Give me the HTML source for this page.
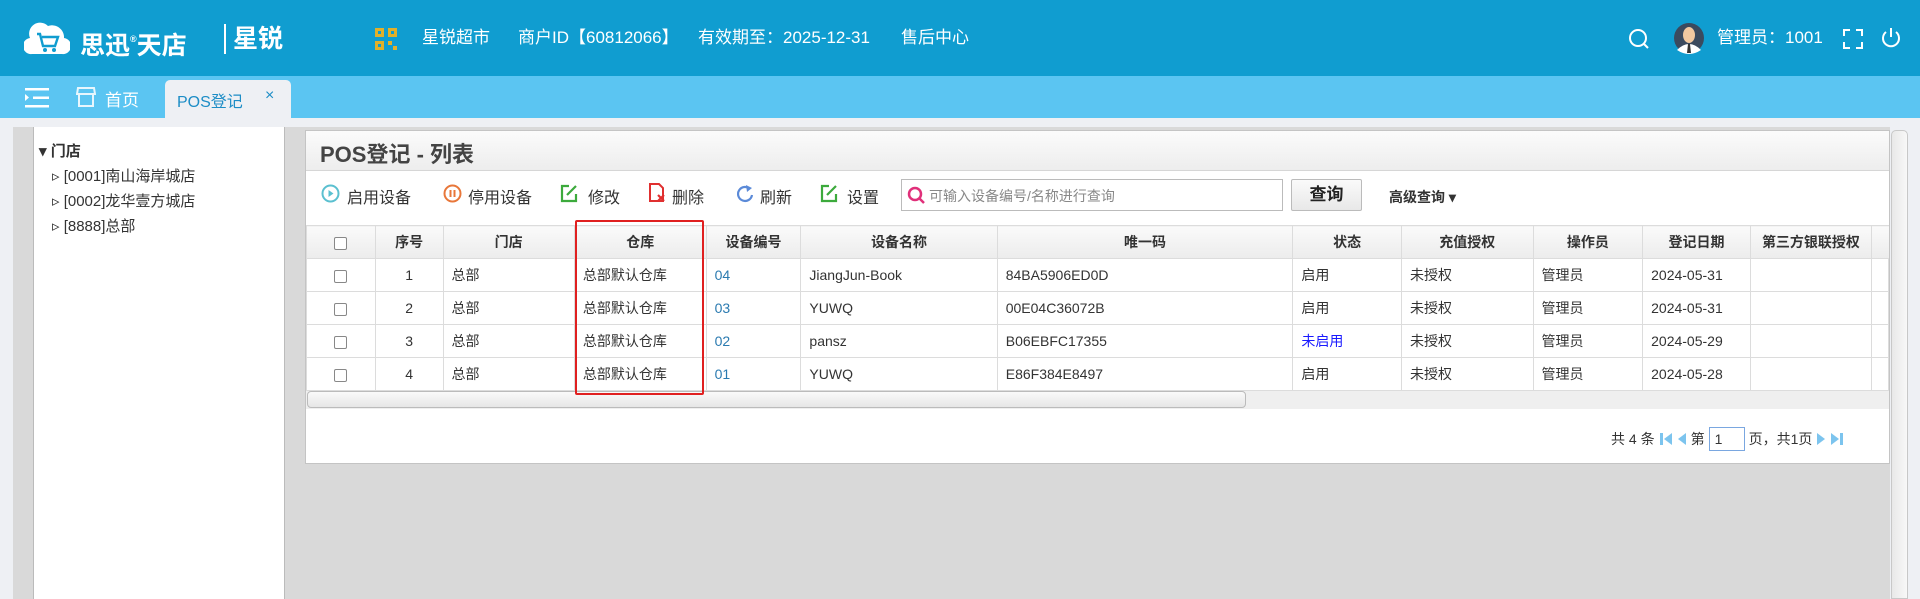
<!DOCTYPE html>
<html><head><meta charset="utf-8"><style>
*{margin:0;padding:0;box-sizing:border-box}
body{width:1920px;height:599px;overflow:hidden;background:#eef0f4;font-family:"Liberation Sans","Noto Sans CJK SC",sans-serif;color:#333;position:relative}
.abs{position:absolute}
.hdr{left:0;top:0;width:1920px;height:76px;background:#109dd0;color:#fff}
.hdr .t{position:absolute;top:27px;font-size:17px;line-height:22px;white-space:nowrap}
.tabs{left:0;top:76px;width:1920px;height:42px;background:#5bc5f2}
.gray{left:13px;top:127px;width:1877px;height:472px;background:#d9d9d9}
.tree{left:33px;top:127px;width:252px;height:472px;background:#fff;border-left:1px solid #bbb;border-right:1px solid #bbb;font-size:15px}
.tree div{position:absolute;white-space:nowrap;color:#333}
.main{left:305px;top:130px;width:1585px;height:334px;background:#fff;border:1px solid #c4c4c4}
.title{position:absolute;left:0;top:0;width:100%;height:40px;background:linear-gradient(#fbfbfb,#ededed);border-bottom:1px solid #d6d6d6;font-size:22px;font-weight:bold;color:#444;padding:6px 0 0 14px}
.tb{position:absolute;top:53px;font-size:16px;white-space:nowrap}
table{position:absolute;left:0;top:94px;border-collapse:collapse;font-size:14px}
td,th{border:1px solid #dcdcdc;height:33px;padding:0 8px;white-space:nowrap;text-align:left;font-weight:normal}
th{height:33px;background:linear-gradient(#fafafa,#ececec);font-weight:bold;text-align:center}
.c{text-align:center}
.cb{display:inline-block;width:13px;height:13px;border:1px solid #888;border-radius:2px;background:#fff;vertical-align:middle}
.lk{color:#2a7ab0}
</style></head><body>
<div class="abs hdr">
 <svg class="abs" style="left:24px;top:20px" width="46" height="36" viewBox="0 0 46 36"><path d="M8 34 A8 8 0 0 1 6 18 A11 11 0 0 1 24 6 A12 12 0 0 1 40 18 A8 8 0 0 1 38 34Z" fill="#fff"/><path d="M13 14h3l3 12h12l3-9H18" stroke="#109dd0" stroke-width="2.4" fill="none"/><circle cx="21" cy="30" r="2" fill="#109dd0"/><circle cx="30" cy="30" r="2" fill="#109dd0"/></svg>
 <div class="t" style="left:80px;top:24px;font-size:25px;line-height:30px;font-weight:bold">思迅<sup style="font-size:9px;vertical-align:12px">®</sup>天店</div>
 <div class="abs" style="left:224px;top:24px;width:2px;height:30px;background:#fff"></div>
 <div class="t" style="left:233px;top:24px;font-size:25px;line-height:30px;font-weight:bold">星锐</div>
 <svg class="abs" style="left:375px;top:28px" width="22" height="22" viewBox="0 0 22 22" fill="#e2b02a"><rect x="0" y="0" width="9" height="9"/><rect x="13" y="0" width="9" height="9"/><rect x="0" y="13" width="9" height="9"/><rect x="13" y="13" width="4" height="4"/><rect x="18" y="18" width="4" height="4"/><rect x="3" y="3" width="3" height="3" fill="#109dd0"/><rect x="16" y="3" width="3" height="3" fill="#109dd0"/><rect x="3" y="16" width="3" height="3" fill="#109dd0"/></svg>
 <div class="t" style="left:422px">星锐超市</div>
 <div class="t" style="left:518px">商户ID【60812066】</div>
 <div class="t" style="left:698px">有效期至：2025-12-31</div>
 <div class="t" style="left:901px">售后中心</div>
 <svg class="abs" style="left:1628px;top:28px" width="22" height="22" viewBox="0 0 22 22"><circle cx="10" cy="10" r="8" stroke="#fff" stroke-width="2" fill="none"/><path d="M16 16l4 4" stroke="#fff" stroke-width="2"/></svg>
 <svg class="abs" style="left:1673px;top:22px" width="32" height="32" viewBox="0 0 32 32"><circle cx="16" cy="16" r="15" fill="#3b4a5e"/><ellipse cx="16" cy="13" rx="6" ry="8" fill="#f2c9a0"/><path d="M4 28 Q16 16 28 28 Q16 36 4 28Z" fill="#fff"/><path d="M15 22h2l1 9h-4z" fill="#333"/></svg>
 <div class="t" style="left:1717px">管理员：1001</div>
 <svg class="abs" style="left:1843px;top:29px" width="20" height="20" viewBox="0 0 20 20" stroke="#fff" stroke-width="2" fill="none"><path d="M1 7V1h6M13 1h6v6M19 13v6h-6M7 19H1v-6"/></svg>
 <svg class="abs" style="left:1880px;top:27px" width="22" height="22" viewBox="0 0 22 22" stroke="#fff" stroke-width="2" fill="none"><path d="M6 5A8 8 0 1 0 16 5"/><path d="M11 1v9"/></svg>
</div>
<div class="abs tabs">
 <svg class="abs" style="left:25px;top:12px" width="24" height="20" viewBox="0 0 24 20" fill="#fff"><rect x="0" y="0" width="24" height="2.5"/><rect x="8" y="8.5" width="16" height="2.5"/><rect x="0" y="17" width="24" height="2.5"/><path d="M0 6l4 3.5-4 3.5z"/></svg>
 <svg class="abs" style="left:76px;top:10px" width="20" height="22" viewBox="0 0 20 22" stroke="#e8f6fd" stroke-width="2" fill="none"><path d="M2 2h16l1 6H1z"/><path d="M3 8v12h14V8"/></svg>
 <div class="abs" style="left:105px;top:10px;color:#fff;font-size:17px">首页</div>
 <div class="abs" style="left:165px;top:4px;width:126px;height:38px;background:#eef0f4;border-radius:5px 5px 0 0;color:#1d8dc6;font-size:16px;padding:8px 0 0 12px">POS登记<span style="position:absolute;left:100px;top:7px;font-size:16px">×</span></div>
</div>
<div class="abs gray"></div>
<div class="abs tree">
 <div style="left:5px;top:13px;font-weight:bold">▾ 门店</div>
 <div style="left:18px;top:38px">▹ [0001]南山海岸城店</div>
 <div style="left:18px;top:63px">▹ [0002]龙华壹方城店</div>
 <div style="left:18px;top:88px">▹ [8888]总部</div>
</div>
<div class="abs" style="left:1891px;top:130px;width:17px;height:469px;background:linear-gradient(90deg,#e8e8e8,#f8f8f8);border:1px solid #c8c8c8;border-radius:5px 5px 0 0"></div>
<div class="abs main">
 <div class="title">POS登记 - 列表</div>
 <svg class="abs" style="left:15px;top:53px" width="19" height="19" viewBox="0 0 19 19"><circle cx="9.5" cy="9.5" r="8" stroke="#5bc0d0" stroke-width="2" fill="none"/><path d="M7.5 6v7l5-3.5z" fill="#5bc0d0"/></svg>
 <div class="tb" style="left:41px">启用设备</div>
 <svg class="abs" style="left:137px;top:53px" width="19" height="19" viewBox="0 0 19 19"><circle cx="9.5" cy="9.5" r="8" stroke="#e8773a" stroke-width="2" fill="none"/><path d="M7.5 6v7M11.5 6v7" stroke="#e8773a" stroke-width="2"/></svg>
 <div class="tb" style="left:162px">停用设备</div>
 <svg class="abs" style="left:254px;top:52px" width="19" height="20" viewBox="0 0 19 20" stroke="#3caa3c" stroke-width="2.2" fill="none"><path d="M9 3H2v15h14v-7"/><path d="M7 12l9-9" /></svg>
 <div class="tb" style="left:282px">修改</div>
 <svg class="abs" style="left:342px;top:52px" width="19" height="20" viewBox="0 0 19 20"><path d="M2 1h9l4 4v13H2z" stroke="#e03030" stroke-width="2" fill="none"/><path d="M10 12l6 6M16 12l-6 6" stroke="#e03030" stroke-width="2.2"/></svg>
 <div class="tb" style="left:366px">删除</div>
 <svg class="abs" style="left:431px;top:53px" width="17" height="19" viewBox="0 0 17 19"><path d="M13 5A7 7 0 1 0 15 11" stroke="#5b8ad8" stroke-width="2.2" fill="none"/><path d="M9 1l6 3-5 4z" fill="#5b8ad8"/></svg>
 <div class="tb" style="left:454px">刷新</div>
 <svg class="abs" style="left:514px;top:52px" width="19" height="20" viewBox="0 0 19 20" stroke="#3caa3c" stroke-width="2.2" fill="none"><path d="M9 3H2v15h14v-7"/><path d="M7 12l9-9"/></svg>
 <div class="tb" style="left:541px">设置</div>
 <div class="abs" style="left:595px;top:48px;width:382px;height:32px;border:1px solid #bbb;background:#fff;font-size:14px;color:#888;padding:6px 0 0 27px">可输入设备编号/名称进行查询
  <svg class="abs" style="left:5px;top:6px" width="19" height="19" viewBox="0 0 19 19"><circle cx="8" cy="8" r="6" stroke="#e0307a" stroke-width="2.5" fill="none"/><path d="M12 12l5 5" stroke="#e0307a" stroke-width="2.5"/></svg></div>
 <div class="abs" style="left:985px;top:48px;width:71px;height:32px;border:1px solid #bbb;border-radius:2px;background:linear-gradient(#fafafa,#e8e8e8);font-size:17px;font-weight:bold;text-align:center;line-height:30px;color:#222">查询</div>
 <div class="abs" style="left:1083px;top:56px;font-size:14px;font-weight:bold;color:#333">高级查询 ▾</div>
 <table>
  <tr><th style="width:69px"><span class="cb"></span></th><th style="width:68px">序号</th><th style="width:132px">门店</th><th style="width:132px">仓库</th><th style="width:95px">设备编号</th><th style="width:197px">设备名称</th><th style="width:297px">唯一码</th><th style="width:109px">状态</th><th style="width:132px">充值授权</th><th style="width:110px">操作员</th><th style="width:108px">登记日期</th><th style="width:121px">第三方银联授权</th><th style="width:14px;border-right:none"></th></tr>
  <tr><td class="c"><span class="cb"></span></td><td class="c">1</td><td>总部</td><td>总部默认仓库</td><td class="lk">04</td><td>JiangJun-Book</td><td>84BA5906ED0D</td><td>启用</td><td>未授权</td><td>管理员</td><td>2024-05-31</td><td></td><td></td></tr>
  <tr><td class="c"><span class="cb"></span></td><td class="c">2</td><td>总部</td><td>总部默认仓库</td><td class="lk">03</td><td>YUWQ</td><td>00E04C36072B</td><td>启用</td><td>未授权</td><td>管理员</td><td>2024-05-31</td><td></td><td></td></tr>
  <tr><td class="c"><span class="cb"></span></td><td class="c">3</td><td>总部</td><td>总部默认仓库</td><td class="lk">02</td><td>pansz</td><td>B06EBFC17355</td><td style="color:#1a1aff">未启用</td><td>未授权</td><td>管理员</td><td>2024-05-29</td><td></td><td></td></tr>
  <tr><td class="c"><span class="cb"></span></td><td class="c">4</td><td>总部</td><td>总部默认仓库</td><td class="lk">01</td><td>YUWQ</td><td>E86F384E8497</td><td>启用</td><td>未授权</td><td>管理员</td><td>2024-05-28</td><td></td><td></td></tr>
 </table>
 <div class="abs" style="left:0;top:260px;width:1583px;height:18px;background:#efefef"></div>
 <div class="abs" style="left:1px;top:260px;width:939px;height:17px;border:1px solid #bbb;border-radius:4px;background:linear-gradient(#fafafa,#e6e6e6)"></div>
 <div class="abs" style="left:269px;top:89px;width:129px;height:175px;border:2px solid #e02020;border-radius:2px"></div>
 <div class="abs" style="left:1305px;top:296px;font-size:14px;white-space:nowrap;color:#333;display:flex;align-items:center;gap:4px">共 4 条
  <svg width="14" height="14" viewBox="0 0 14 14" fill="#7cc4ee"><rect x="1" y="1" width="3" height="12"/><path d="M13 1v12L5 7z"/></svg>
  <svg width="10" height="14" viewBox="0 0 10 14" fill="#7cc4ee"><path d="M9 1v12L1 7z"/></svg>
  第<span style="display:inline-block;width:36px;height:24px;border:1px solid #7aa7e0;padding:3px 0 0 5px">1</span>页，共1页
  <svg width="10" height="14" viewBox="0 0 10 14" fill="#7cc4ee"><path d="M1 1v12l8-6z"/></svg>
  <svg width="14" height="14" viewBox="0 0 14 14" fill="#7cc4ee"><path d="M1 1v12l8-6z"/><rect x="10" y="1" width="3" height="12"/></svg>
 </div>
</div>
</body></html>
